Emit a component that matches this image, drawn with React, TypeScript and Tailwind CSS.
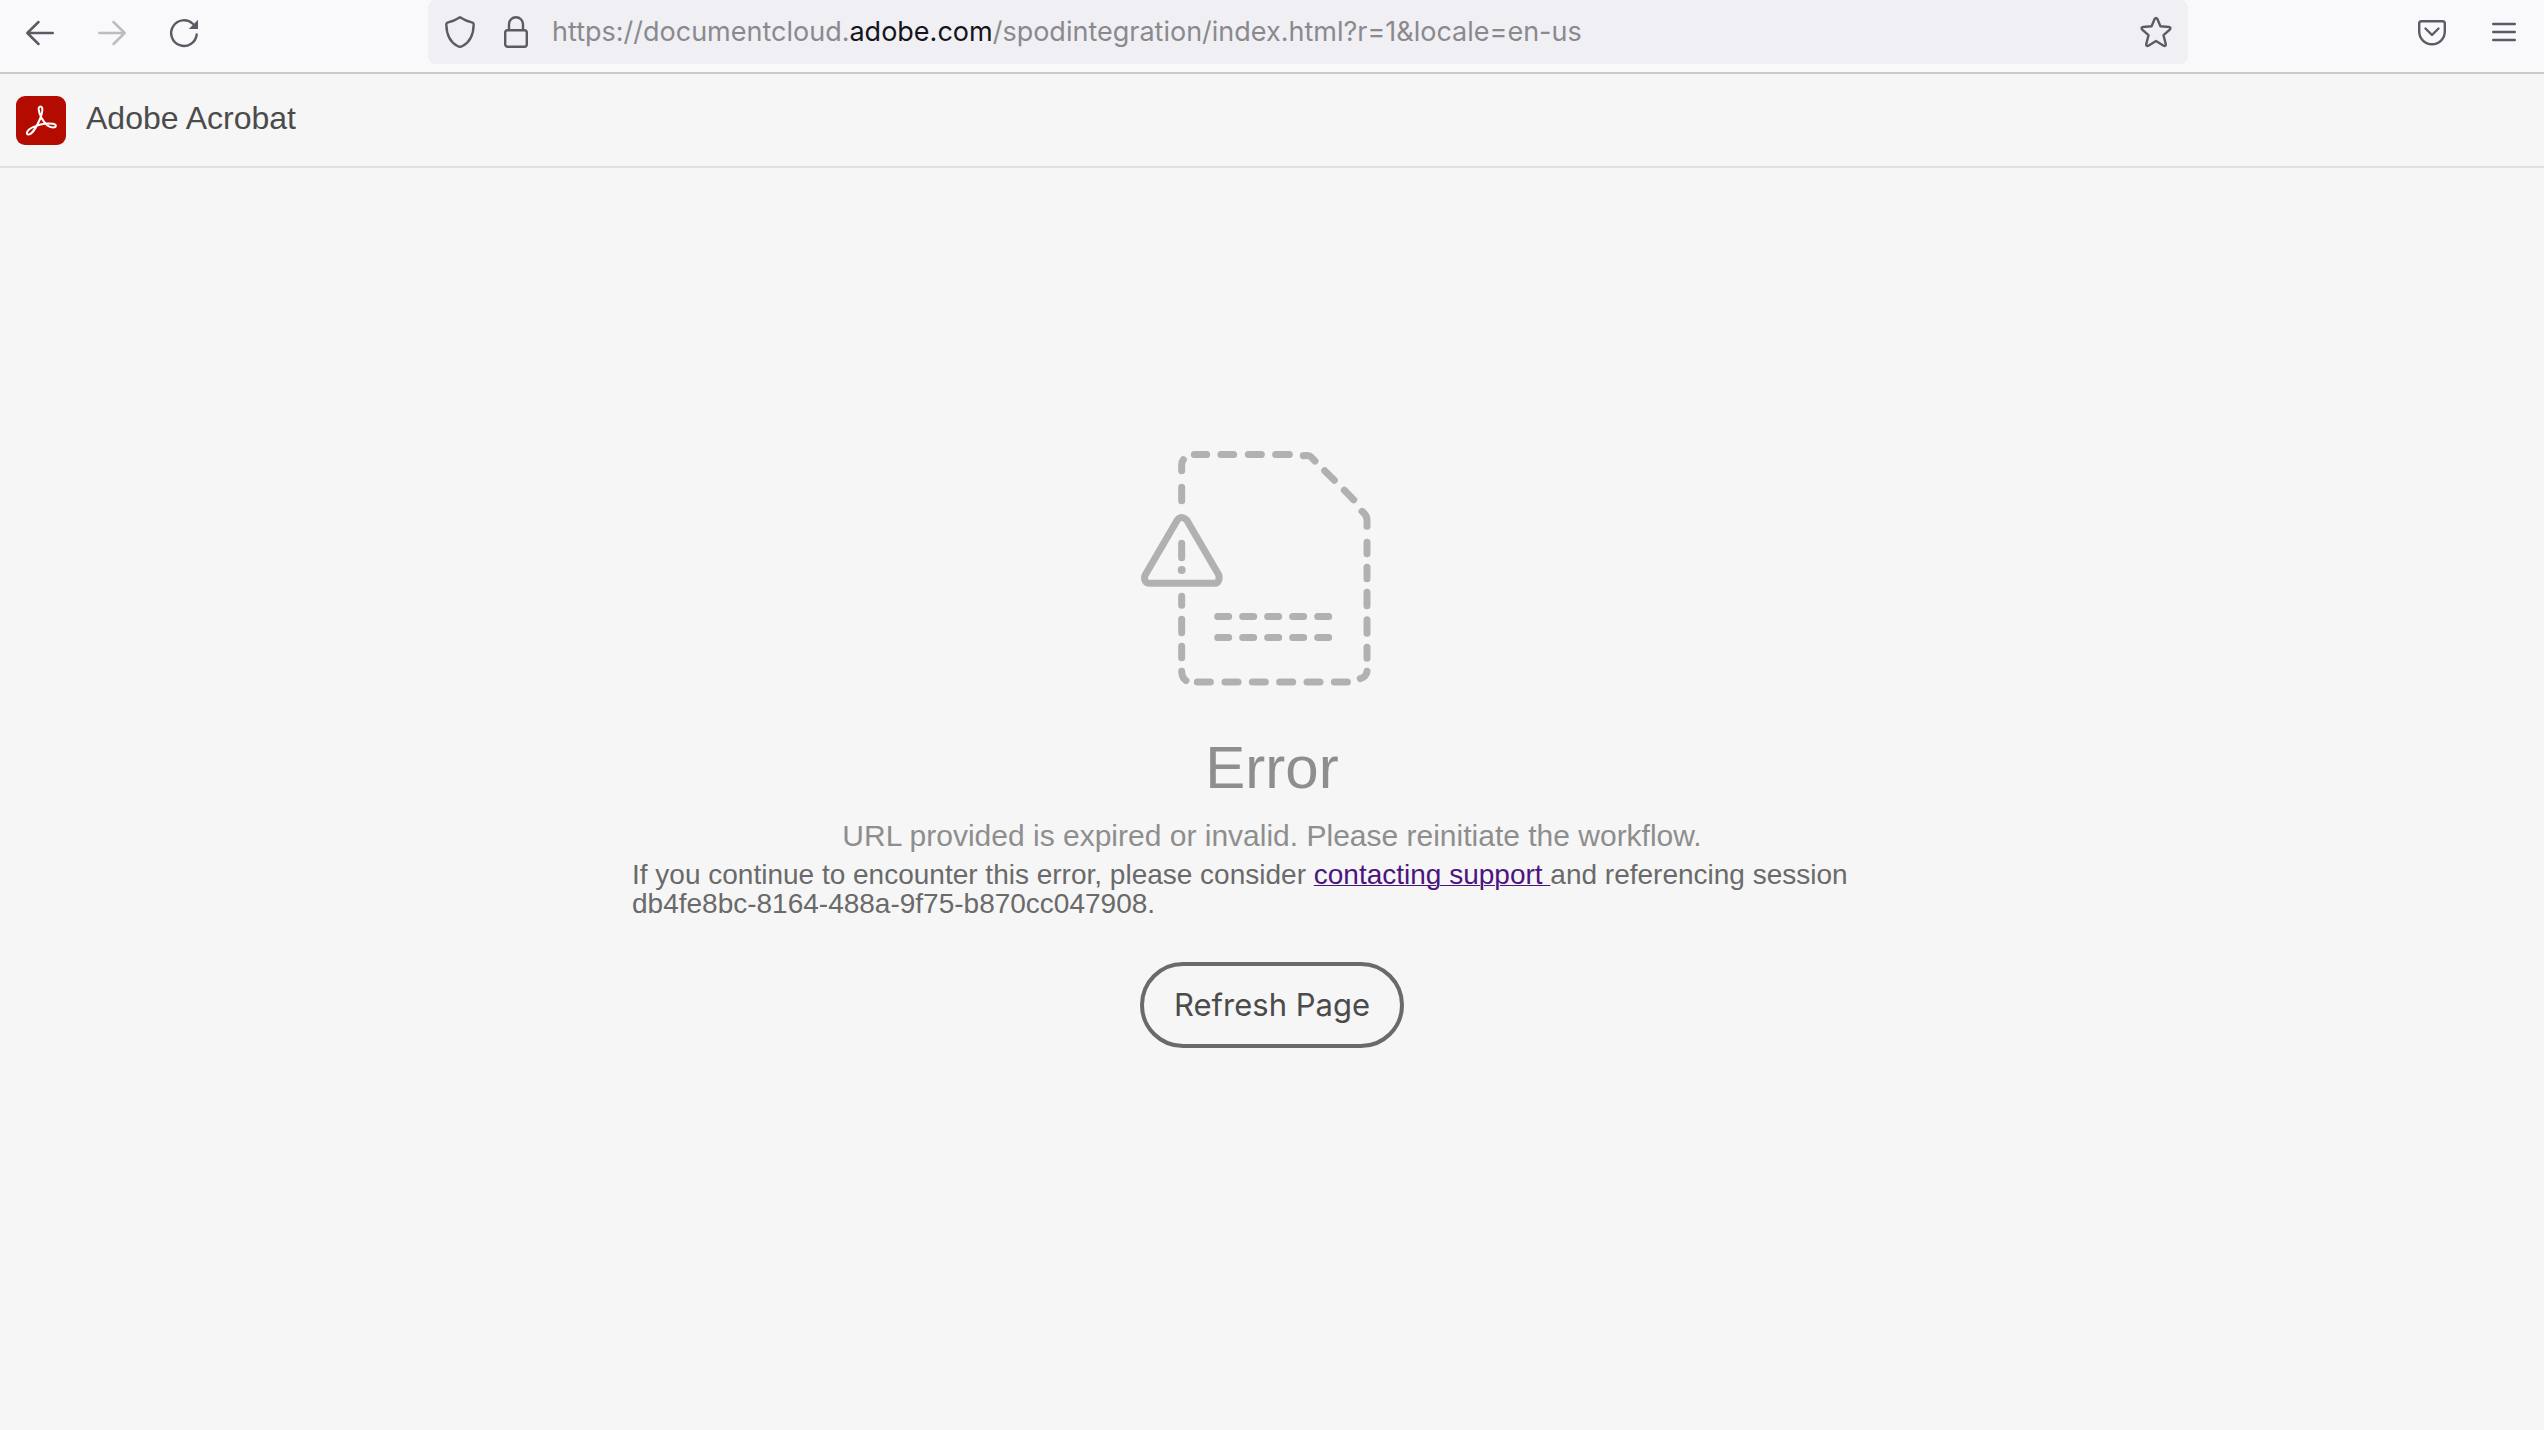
import React from "react";

const iconButton = "flex size-14 items-center justify-center rounded-lg";

function BackIcon({ className }: { className: string }) {
  return (
    <svg viewBox="0 0 32 32" className={className} fill="none" stroke="currentColor" strokeWidth="2.5" strokeLinecap="round" strokeLinejoin="round">
      <path d="M28.700 16H3.500M14.500 5L3.300 16L14.500 27" />
    </svg>
  );
}

function ReloadIcon() {
  return (
    <svg viewBox="0 0 32 32" className="size-8" fill="none" stroke="currentColor" strokeWidth="2.4" strokeLinecap="round">
      <path d="M28.700 17.500A12.800 12.800 0 1 1 25 7" />
      <path d="M30 2.800V12H20.800Z" fill="currentColor" stroke="none" />
    </svg>
  );
}

function ShieldIcon() {
  return (
    <svg viewBox="0 0 32 36" className="h-9 w-8" fill="none" stroke="currentColor" strokeWidth="2.4" strokeLinejoin="round">
      <path d="M16 3.200C12 5.900 7.500 7.600 3.400 8.600Q2.200 9 2.300 10.500C2.600 21 6.500 28.500 13.500 32Q16 33.500 18.500 32C25.500 28.500 29.400 21 29.700 10.500Q29.800 9 28.600 8.600C24.500 7.600 20 5.900 16 3.200Z" />
    </svg>
  );
}

function LockIcon() {
  return (
    <svg viewBox="0 0 32 36" className="h-9 w-8" fill="none" stroke="currentColor" strokeWidth="2.4">
      <rect x="5.200" y="16.200" width="21.600" height="16.600" rx="2.500" />
      <path d="M9 16V10.200a7 7 0 0 1 14 0V16" />
    </svg>
  );
}

function StarIcon() {
  return (
    <svg viewBox="0 0 32 32" className="size-8" fill="none" stroke="currentColor" strokeWidth="2.400" strokeLinejoin="round">
      <path d="M14.600 3Q16 1 17.400 3L20.400 10.300L29 11Q31.500 11.600 29.800 13.600L23.500 19.200L25.800 28.200Q25.900 30.600 23.600 29.700L16 25L8.400 29.700Q6.100 30.600 6.200 28.200L8.500 19.200L2.200 13.600Q.5 11.600 3 11L11.600 10.300Z" />
    </svg>
  );
}

function PocketIcon() {
  return (
    <svg viewBox="0 0 32 32" className="size-8" fill="none" stroke="currentColor" strokeWidth="2.400" strokeLinecap="round" strokeLinejoin="round">
      <path d="M5.500 5.200H26.500Q28.800 5.200 28.800 7.500V15.500A12.800 12.800 0 0 1 3.200 15.500V7.500Q3.200 5.200 5.500 5.200Z" />
      <path d="M9.500 12.500L16 19L22.500 12.500" />
    </svg>
  );
}

function MenuIcon() {
  return (
    <svg viewBox="0 0 32 32" className="size-8" fill="none" stroke="currentColor" strokeWidth="2.400" strokeLinecap="round">
      <path d="M5.200 8H26.800M5.200 16H26.800M5.200 24H26.800" />
    </svg>
  );
}

function AcrobatLogo() {
  return (
    <svg viewBox="0 0 50 49" className="h-[49px] w-[50px]" aria-hidden="true">
      <rect width="50" height="49" rx="9" fill="#b30b00" />
      <path
        d="M24.500 10.500C21.500 10.500 22.500 16 25.300 21.500C28 26.500 32 31.500 37 31.500C40.500 31.500 41 28.500 37 27.800C31 26.800 22 28.800 16 31.700C10.500 34.300 9.500 38.500 12.500 38.500C16 38.500 21 30 24 23C26.500 17 27.500 10.500 24.500 10.500Z"
        fill="none"
        stroke="#fff"
        strokeWidth="2"
      />
    </svg>
  );
}

function MissingFileArt() {
  return (
    <svg viewBox="63 63 786 705" className="h-[235px] w-[262px]" fill="none" stroke="#b1b1b1" strokeWidth="21" strokeLinecap="round" strokeLinejoin="round" aria-hidden="true">
      <path d="M223 73.500H260M303 73.500H341M385 73.500H424M467 73.500H508" />
      <path d="M185 122V105Q185 95 190 89M185 172V212M185 499V526M185 568V608M185 649V683" />
      <path d="M550 77Q570 74 576 84L585 93M614 122L643 151M673 181L701 209M726 244Q741 256 741 270V289" />
      <path d="M741 337V371M741 412V446M741 487V527M741 569V610M741 652V685M741 724Q739 740 721 746" />
      <path d="M185 724Q186 744 198 752M232 756H271M315 756H354M397 756H436M479 756H518M561 756H600M643 756H682" />
      <path d="M293 559.500H326M368 559.500H401M443 559.500H476M518 559.500H551M593 559.500H626" />
      <path d="M293 622.500H326M368 622.500H401M443 622.500H476M518 622.500H551M593 622.500H626" />
      <path d="M172 270Q185 255 200 270L296 434C300 450 294 460 283 460H89C76 460 70 448 76 434Z" />
      <path d="M185 340V383" />
      <circle cx="185" cy="420" r="12" fill="#b1b1b1" stroke="none" />
    </svg>
  );
}

export default function App() {
  return (
    <div className="flex min-h-screen flex-col bg-[#f6f6f6] font-['Liberation_Sans',Arial,sans-serif]">
      <nav className="flex h-[74px] items-start border-b-2 border-[#cacaca] bg-[#f9f9fb] text-[#5b5b66]" aria-label="Browser toolbar">
        <div className="flex w-[428px] shrink-0 items-center gap-4 pt-[5px] pl-3">
          <button type="button" aria-label="Back" className={iconButton}>
            <BackIcon className="size-8" />
          </button>
          <button type="button" aria-label="Forward" disabled className={iconButton}>
            <BackIcon className="size-8 rotate-180 text-[#bdbdc1]" />
          </button>
          <button type="button" aria-label="Reload" className={iconButton}>
            <ReloadIcon />
          </button>
        </div>
        <div className="flex h-16 min-w-0 flex-1 items-center rounded-lg bg-[#f0f0f4] px-4">
          <button type="button" aria-label="Tracking protection"><ShieldIcon /></button>
          <button type="button" aria-label="Site security" className="ml-6"><LockIcon /></button>
          <div role="textbox" aria-label="Address" className="ml-5 min-w-0 flex-1 overflow-hidden font-['Inter',sans-serif] text-[27px] leading-10 whitespace-nowrap text-[#8a8a8e]">
            https://documentcloud.<span className="text-[#15141a]">adobe.com</span>/spodintegration/index.html?r=1&amp;locale=en-us
          </div>
          <button type="button" aria-label="Bookmark this page"><StarIcon /></button>
        </div>
        <div className="flex w-[356px] shrink-0 items-center justify-end gap-4 pt-1 pr-3">
          <button type="button" aria-label="Save to Pocket" className={iconButton}><PocketIcon /></button>
          <button type="button" aria-label="Open application menu" className={iconButton}><MenuIcon /></button>
        </div>
      </nav>

      <header className="flex h-[94px] items-center gap-5 border-b-2 border-[#e1e1e1] px-4">
        <AcrobatLogo />
        <span className="pb-1 text-[32px] leading-10 text-[#4b4b4b]">Adobe Acrobat</span>
      </header>

      <main className="flex flex-col items-center px-8 pt-[283px] pb-16">
        <MissingFileArt />
        <h1 className="mt-[46px] text-[60px] leading-[72px] text-[#8e8e8e]">Error</h1>
        <p className="mt-3 text-[30px] leading-10 text-[#8e8e8e]">
          URL provided is expired or invalid. Please reinitiate the workflow.
        </p>
        <p className="mt-1 w-full max-w-[1280px] text-[28px] leading-[29px] text-[#6a6a6a]">
          If you continue to encounter this error, please consider{" "}
          <a href="#support" className="text-[#4b1580] underline decoration-1">contacting support </a>
          and referencing session db4fe8bc-8164-488a-9f75-b870cc047908.
        </p>
        <button type="button" className="mt-11 h-[86px] rounded-full border-4 border-[#6a6a6a] px-[30px] font-['Inter',sans-serif] text-[31px] leading-10 text-[#4b4b4b]">
          Refresh Page
        </button>
      </main>
    </div>
  );
}
